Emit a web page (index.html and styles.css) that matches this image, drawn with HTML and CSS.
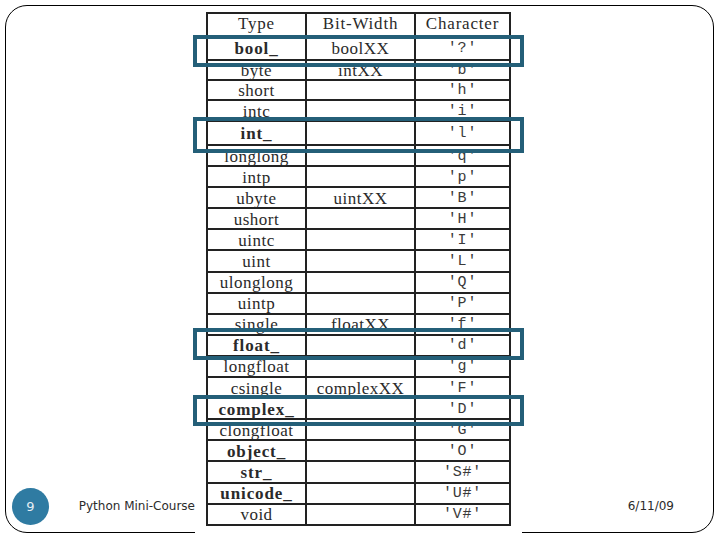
FILE: index.html
```html
<!DOCTYPE html>
<html>
<head>
<meta charset="utf-8">
<link rel="stylesheet" href="styles.css">
</head>
<body>
<div class="slide">
  <div class="side left">
    <div class="num">9</div>
    <div class="course">Python Mini-Course</div>
  </div>
  <div class="picture">
    <div class="dtable">
      <div class="c h">Type</div><div class="c h">Bit-Width</div><div class="c h">Character</div>
      <div class="c b">bool_</div><div class="c">boolXX</div><div class="c m">'?'</div>
      <div class="c">byte</div><div class="c">intXX</div><div class="c m">'b'</div>
      <div class="c">short</div><div class="c"></div><div class="c m">'h'</div>
      <div class="c">intc</div><div class="c"></div><div class="c m">'i'</div>
      <div class="c b">int_</div><div class="c"></div><div class="c m">'l'</div>
      <div class="c">longlong</div><div class="c"></div><div class="c m">'q'</div>
      <div class="c">intp</div><div class="c"></div><div class="c m">'p'</div>
      <div class="c">ubyte</div><div class="c">uintXX</div><div class="c m">'B'</div>
      <div class="c">ushort</div><div class="c"></div><div class="c m">'H'</div>
      <div class="c">uintc</div><div class="c"></div><div class="c m">'I'</div>
      <div class="c">uint</div><div class="c"></div><div class="c m">'L'</div>
      <div class="c">ulonglong</div><div class="c"></div><div class="c m">'Q'</div>
      <div class="c">uintp</div><div class="c"></div><div class="c m">'P'</div>
      <div class="c">single</div><div class="c">floatXX</div><div class="c m">'f'</div>
      <div class="c b">float_</div><div class="c"></div><div class="c m">'d'</div>
      <div class="c">longfloat</div><div class="c"></div><div class="c m">'g'</div>
      <div class="c">csingle</div><div class="c">complexXX</div><div class="c m">'F'</div>
      <div class="c b">complex_</div><div class="c"></div><div class="c m">'D'</div>
      <div class="c">clongfloat</div><div class="c"></div><div class="c m">'G'</div>
      <div class="c b">object_</div><div class="c"></div><div class="c m">'O'</div>
      <div class="c b">str_</div><div class="c"></div><div class="c m">'S#'</div>
      <div class="c b">unicode_</div><div class="c"></div><div class="c m">'U#'</div>
      <div class="c">void</div><div class="c"></div><div class="c m">'V#'</div>
    </div>
    <div class="mark mark-bool"></div>
    <div class="mark mark-int"></div>
    <div class="mark mark-float"></div>
    <div class="mark mark-complex"></div>
  </div>
  <div class="side right">
    <div class="date">6/11/09</div>
  </div>
</div>
</body>
</html>
```
FILE: styles.css
```css
html, body {
  margin: 0;
  padding: 0;
  background: #ffffff;
  overflow: hidden;
}

.slide {
  margin: 5px 0 0 5px;
  width: 709px;
  height: 528px;
  box-sizing: border-box;
  border: 1px solid #000;
  border-radius: 22px;
  display: grid;
  grid-template-columns: 189px 327px 1fr;
  grid-template-rows: minmax(0, 1fr);
  padding-top: 3px;
}

.side {
  display: flex;
  align-items: flex-end;
  padding-bottom: 7px;
  font-family: "DejaVu Sans", Verdana, sans-serif;
  font-size: 12px;
  color: #2b2b2b;
}

.left {
  padding-left: 6px;
  gap: 30px;
}

.num {
  width: 37px;
  height: 37px;
  border-radius: 50%;
  background: #2f7ba2;
  color: #e6eef4;
  display: flex;
  align-items: center;
  justify-content: center;
  font-size: 13px;
}

.course,
.date {
  height: 37px;
  line-height: 37px;
  white-space: nowrap;
}

.right {
  justify-content: flex-end;
  padding-right: 39px;
}

.picture {
  position: relative;
  height: 529px;
  background: #fff;
  padding: 3px 0 0 11px;
  box-sizing: border-box;
  z-index: 1;
}

.dtable {
  display: grid;
  grid-template-columns: 97px 107px 93px;
  grid-template-rows: 21px 22px 18px 18px 19px 22px repeat(18, 19.1px);
  column-gap: 2px;
  row-gap: 2px;
  padding: 2px;
  background: #222;
  width: max-content;
}

.c {
  background: #fff;
  display: flex;
  align-items: center;
  justify-content: center;
  font-family: "Liberation Serif", "Times New Roman", serif;
  font-size: 17px;
  letter-spacing: 0.5px;
  color: #2a2a2a;
  line-height: 1;
  white-space: nowrap;
  padding-top: 1px;
}

.c.h {
  letter-spacing: 0.8px;
  padding-top: 0;
  padding-bottom: 3px;
}

.c.b {
  font-weight: bold;
  letter-spacing: 0.9px;
}

.c.m {
  font-family: "Liberation Mono", "Courier New", monospace;
  font-size: 15px;
  letter-spacing: 0.8px;
  color: #3a3a3a;
}

.mark {
  position: absolute;
  left: -2px;
  width: 331px;
  height: 32px;
  box-sizing: border-box;
  border: 4px solid #245f78;
}

.mark-bool { top: 26px; }
.mark-int { top: 108px; height: 36px; }
.mark-float { top: 319px; }
.mark-complex { top: 386px; height: 31px; }
```
